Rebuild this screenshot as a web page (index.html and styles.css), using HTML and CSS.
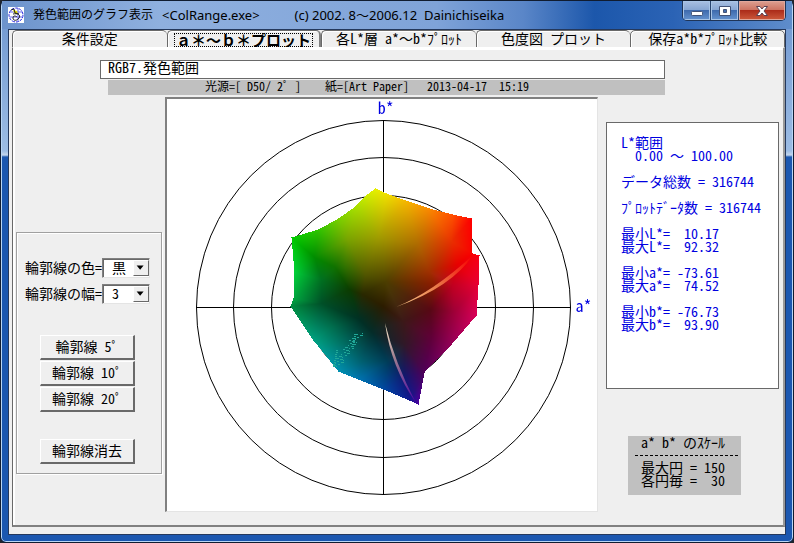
FILE: index.html
```html
<!DOCTYPE html>
<html lang="ja">

<head>
    <meta charset="utf-8">
    <title>発色範囲のグラフ表示</title>
    <link rel="stylesheet" href="styles.css">
</head>

<body>
    <div class="window">
        <header class="title-bar">
            <svg class="app-icon" width="16" height="16" viewBox="0 0 16 16">
                <rect width="16" height="16" fill="#fff" />
                <circle cx="8" cy="8" r="7" fill="none" stroke="#2222dd" stroke-dasharray="3 1" />
                <path d="M2 5h12M2 10h12M10 1v14" stroke="#6a6aee" fill="none" />
                <path d="M5 3l4 1 1 3-4-1z" fill="#e8e000" />
                <path d="M3 3l3-1 1 4 4 1M5 7c5-1 8 1 6 4s-6 3-6 0 3-2 4-1" fill="none" stroke="#222" />
            </svg>
            <h1><span>発色範囲のグラフ表示</span><span class="latin">&lt;ColRange.exe&gt;</span><span class="latin copyright">(c) 2002. 8～2006.12&nbsp; Dainichiseika</span></h1>
            <div class="window-buttons">
                <button type="button" aria-label="最小化">
                    <svg width="14" height="12" viewBox="0 0 14 12"><rect x="1.5" y="6.5" width="11" height="4" rx="1" fill="#fff" stroke="#435377" /></svg>
                </button>
                <button type="button" aria-label="最大化">
                    <svg width="14" height="12" viewBox="0 0 14 12"><path fill-rule="evenodd" d="M1.500 1.500h11v9h-11zM5.500 4.500v3h3v-3z" fill="#fff" stroke="#435377" /></svg>
                </button>
                <button type="button" class="close" aria-label="閉じる">
                    <svg width="14" height="12" viewBox="0 0 14 12"><path d="M1.500 1.500h3.500l2 2.500 2-2.500h3.500l-3.500 4.500 3.500 4.500h-3.500l-2-2.500-2 2.500h-3.500l3.500-4.500z" fill="#fff" stroke="#5c4050" /></svg>
                </button>
            </div>
        </header>

        <main class="client">
            <nav class="tabs">
                <button type="button">条件設定</button>
                <button type="button" class="active"><span class="wide">ａ＊～ｂ＊プロット</span></button>
                <button type="button">各L*層 a*<span class="wide">～</span>b*ﾌﾟﾛｯﾄ</button>
                <button type="button">色度図 プロット</button>
                <button type="button">保存a*b*ﾌﾟﾛｯﾄ比較</button>
            </nav>

            <section class="page">
                <div class="heading">
                    <input type="text" class="data-name" aria-label="データ名" value="RGB7.発色範囲">
                    <p class="conditions">光源=[ D50/ 2ﾟ ]    紙=[Art Paper]   2013-04-17  15:19</p>
                </div>

                <div class="columns">
                    <form class="outline-box">
                        <div class="field">
                            <label for="line-color">輪郭線の色=</label>
                            <span class="combo">
                                <select id="line-color">
                                    <option>黒</option>
                                    <option>白</option>
                                </select>
                                <svg width="16" height="16" viewBox="0 0 16 16"><path d="M3 5h8l-4 5z" /></svg>
                            </span>
                        </div>
                        <div class="field">
                            <label for="line-width">輪郭線の幅=</label>
                            <span class="combo">
                                <select id="line-width">
                                    <option>3</option>
                                    <option>2</option>
                                    <option>1</option>
                                </select>
                                <svg width="16" height="16" viewBox="0 0 16 16"><path d="M3 5h8l-4 5z" /></svg>
                            </span>
                        </div>
                        <div class="actions">
                            <button type="button">輪郭線 5ﾟ</button>
                            <button type="button">輪郭線 10ﾟ</button>
                            <button type="button">輪郭線 20ﾟ</button>
                            <button type="button" class="clear">輪郭線消去</button>
                        </div>
                    </form>

                    <div class="plot">
                        <div class="plot-area">
                            <canvas id="plot" width="430" height="412"></canvas>
                            <span class="axis axis-b">b*</span>
                            <span class="axis axis-a">a*</span>
                        </div>
                    </div>

                    <aside class="side">
                        <pre class="stats">L*範囲
  0.00 <span class="wide">～</span> 100.00

データ総数 = 316744

ﾌﾟﾛｯﾄﾃﾞｰﾀ数 = 316744

最小L*=  10.17
最大L*=  92.32

最小a*= -73.61
最大a*=  74.52

最小b*= -76.73
最大b*=  93.90</pre>
                        <div class="scale">
                            <h2>a* b* のｽｹｰﾙ</h2>
                            <hr>
                            <pre>最大円 = 150
各円毎 =  30</pre>
                        </div>
                    </aside>
                </div>
            </section>
        </main>
    </div>
    <script src="plot.js"></script>
</body>

</html>
```
FILE: styles.css
```css
* {
    box-sizing: border-box;
}

body {
    margin: 0;
    background: #20242c;
    font-family: "Noto Sans CJK JP", sans-serif;
    font-size: 14px;
    /* half-width latin so that the columns line up */
    font-feature-settings: "hwid";
    color: #000;
}

button,
input,
select,
pre {
    font: inherit;
    font-feature-settings: inherit;
    color: inherit;
    margin: 0;
}

.wide {
    font-feature-settings: normal;
}

/* Window frame */
.window {
    display: flex;
    flex-direction: column;
    min-height: 100vh;
    padding: 0 7px 7px;
    border: 1px solid #101c30;
    border-radius: 6px;
    background: linear-gradient(#6d95cf 0, #9cbce4 150px, #c5d7ee 154px, #1b57b0 156px, #1b57b0 100%);
    box-shadow: inset 0 0 0 1px #b9d6f5;
}

.title-bar {
    display: flex;
    align-items: flex-start;
    height: 28px;
    margin: 0 -6px;
    padding-left: 6px;
    background: linear-gradient(90deg, #6c93cc 0, #8fb0df 20%, #7fa3d8 55%, #5a86c8 66%, #1c57ab 75%, #2b63b5 85%, #5f8dcb 100%);
}

.app-icon {
    margin-top: 6px;
}

h1 {
    display: flex;
    gap: 9px;
    flex: 1;
    margin: 5px 0 0 9px;
    font-family: "Noto Sans", "Noto Sans CJK JP", sans-serif;
    font-feature-settings: normal;
    font-size: 12px;
    font-weight: normal;
    line-height: 18px;
    white-space: nowrap;
}

h1 .latin {
    font-size: 13px;
}

h1 .copyright {
    margin-left: 26px;
}

.window-buttons {
    display: flex;
    margin-right: 6px;
    border: 1px solid #1f3558;
    border-top: 0;
    border-radius: 0 0 5px 5px;
    overflow: hidden;
}

.window-buttons button {
    display: flex;
    align-items: center;
    justify-content: center;
    width: 28px;
    height: 19px;
    padding: 0;
    border: 0;
    border-right: 1px solid #294570;
    background: linear-gradient(#a9c0e2 0, #86a5d2 48%, #3f6bae 50%, #6593cf 100%);
    box-shadow: inset 0 0 0 1px #a8c4e6;
}

.window-buttons .close {
    width: 46px;
    border-right: 0;
    background: linear-gradient(#dda092 0, #cc7260 48%, #ac2c1a 50%, #cd5a3c 100%);
    box-shadow: inset 0 0 0 1px #e0a79b;
}

.client {
    display: flex;
    flex-direction: column;
    flex: 1;
    padding: 0 0 7px 3px;
    border: 1px solid #24385c;
    background: #efefef;
}

/* Tabs */
.tabs {
    display: grid;
    grid-template-columns: repeat(5, 1fr);
    height: 17px;
}

.tabs button {
    padding: 0 0 2px;
    border: 0;
    border-top: 1px solid #696969;
    border-left: 1px solid #696969;
    border-bottom: 1px solid #696969;
    border-radius: 5px 5px 0 0;
    background: #efefef;
    box-shadow: inset 1px 1px #fff;
    line-height: 14px;
    white-space: nowrap;
}

.tabs button:last-child {
    border-right: 1px solid #696969;
}

.tabs .active {
    padding: 0;
    border-right: 2px solid #808080;
    border-bottom: 0;
    font-size: 15px;
    font-weight: bold;
}

.tabs .active span {
    display: inline-block;
    padding: 0 2px;
    outline: 1px dotted #000;
    outline-offset: -1px;
}

.page {
    flex: 1;
    border: 1px solid #696969;
    border-top: 1px solid #fff;
    border-right: 2px solid #999;
    border-bottom: 2px solid #808080;
    box-shadow: inset 2px 2px #fff;
    padding: 12px 6px 13px 2px;
}

/* Data name and measuring conditions */
.heading {
    margin: 0 112px 0 85px;
}

.data-name {
    display: block;
    width: 100%;
    height: 19px;
    padding: 0 7px 5px;
    border: 1px solid #696969;
    background: #fff;
    line-height: 17px;
}

.conditions {
    height: 15px;
    margin: 1px 0 2px 8px;
    padding-left: 97px;
    background: #c0c0c0;
    font-size: 12px;
    line-height: 12px;
    white-space: pre;
}

.columns {
    display: grid;
    grid-template-columns: 147px minmax(0, 1fr) 176px;
    column-gap: 3px;
}

/* Outline settings */
.outline-box {
    align-self: start;
    height: 242px;
    margin-top: 135px;
    margin-left: 1px;
    padding: 25px 0 0 8px;
    border: 1px solid #a0a0a0;
    box-shadow: 1px 1px #fff, inset 1px 1px #fff;
}

.field {
    display: flex;
    align-items: flex-start;
    height: 20px;
    margin-bottom: 6px;
    line-height: 18px;
    white-space: nowrap;
}

.combo {
    position: relative;
    width: 48px;
    height: 20px;
    border: 1px solid #808080;
    border-right-color: #e4e4e4;
    border-bottom-color: #e4e4e4;
    box-shadow: inset 1px 1px #696969;
    background: #fff;
}

.combo select {
    appearance: none;
    display: block;
    width: 100%;
    height: 18px;
    padding: 0 16px 2px 9px;
    border: 0;
    background: transparent;
    line-height: 16px;
}

.combo svg {
    position: absolute;
    top: 1px;
    right: 0;
    border: 1px solid #fff;
    border-right-color: #696969;
    border-bottom-color: #696969;
    background: #efefef;
    pointer-events: none;
}

.actions {
    display: flex;
    flex-direction: column;
    gap: 1px;
    width: 95px;
    margin: 31px 0 0 15px;
}

.actions button {
    height: 25px;
    padding: 0 0 2px;
    border: 1px solid #fff;
    border-right: 2px solid #696969;
    border-bottom: 2px solid #696969;
    background: #efefef;
    line-height: 20px;
    white-space: nowrap;
}

.actions .clear {
    margin-top: 26px;
}

/* Plot */
.plot {
    display: flex;
    justify-content: center;
    min-height: 415px;
    border: 2px solid #808080;
    border-right: 1px solid #e4e4e4;
    border-bottom: 1px solid #e4e4e4;
    background: #fff;
}

.plot-area {
    position: relative;
    align-self: flex-start;
}

.plot-area canvas {
    display: block;
    max-width: 100%;
}

.axis {
    position: absolute;
    color: #0000e0;
    font-size: 16px;
    line-height: 16px;
}

.axis-b {
    left: 49%;
    top: 0;
}

.axis-a {
    left: 95%;
    top: 48%;
}

/* Results on the right */
.side {
    padding-left: 5px;
    margin-right: -2px;
}

.stats {
    height: 267px;
    margin-top: 25px;
    padding: 13px 0 0 14px;
    border: 1px solid #696969;
    background: #fff;
    color: #0000e0;
    line-height: 13px;
}

.scale {
    width: 113px;
    height: 59px;
    margin: 47px 0 0 22px;
    padding: 0 3px 0 7px;
    background: #c0c0c0;
    line-height: 13px;
}

.scale h2 {
    margin: 0 0 0 6px;
    font-size: 14px;
    font-weight: normal;
}

.scale hr {
    margin: 6px 0 5px;
    border: 0;
    border-top: 1px dashed #000;
}

.scale pre {
    margin-left: 6px;
}
```
FILE: plot.js
```js
const canvas = document.getElementById("plot");
const ctx = canvas.getContext("2d");
const cx = 216;
const cy = 208;

// edge of the colour range, clockwise: x, y, colour
const edge = [
    [208, 89, "e8f000"], [219, 94, "f0e000"], [238, 101, "f5b800"], [262, 109, "fa8800"], [285, 115, "ff5000"], [304, 119, "ff0000"],
    [305, 154, "fa0000"], [312, 156, "f80014"], [311, 185, "e80034"], [309, 216, "d80058"],
    [284, 245, "940058"], [257, 273, "500058"], [251, 305, "4800a0"], [242, 301, "101890"],
    [216, 290, "0048a0"], [191, 280, "0074b0"], [171, 272, "0090b0"], [146, 241, "00a080"],
    [123, 207, "008c40"], [126, 199, "00a840"], [127, 173, "00d038"], [124, 138, "00cc00"],
    [151, 130, "30c400"], [171, 119, "78d000"], [188, 107, "a8e000"], [200, 95, "d0ec00"]
];

const inner = [
    [211, 138, "a09c00"], [250, 144, "b06c00"], [284, 142, "e83000"], [262, 172, "a03000"],
    [180, 140, "78a400"], [168, 168, "107000"], [178, 168, "307000"], [182, 190, "0c3c00"],
    [198, 176, "505400"], [218, 182, "4c3e00"], [195, 195, "282800"],
    [216, 207, "2c1c00"], [266, 184, "8c1c00"], [263, 210, "580814"], [204, 232, "042c28"],
    [192, 220, "003024"], [164, 228, "007050"], [180, 245, "006860"], [194, 262, "006070"],
    [237, 245, "301828"], [236, 222, "3c1818"], [264, 238, "600038"],
    [154, 204, "005028"], [154, 180, "007020"], [147, 158, "008c00"], [287, 212, "a00038"],
    [237, 278, "101870"], [285, 186, "c00020"], [220, 262, "003c58"], [290, 165, "e80000"]
];

function toPoint(p) {
    let n = parseInt(p[2], 16);
    return { x: p[0], y: p[1], c: [n >> 16, (n >> 8) & 255, n & 255] };
}

function tracePath(points) {
    ctx.beginPath();
    for (let p of points) {
        ctx.lineTo(p[0], p[1]);
    }
    ctx.closePath();
}

function cross(a, b, p) {
    return (b.x - a.x) * (p.y - a.y) - (b.y - a.y) * (p.x - a.x);
}

// Delaunay triangles: no other point lies in the circle round the three corners
function triangulate(pts) {
    let result = [];
    for (let i = 0; i < pts.length; i++) {
        for (let j = i + 1; j < pts.length; j++) {
            for (let k = j + 1; k < pts.length; k++) {
                let a = pts[i], b = pts[j], c = pts[k];
                let d = 2 * cross(a, b, c);
                if (d == 0) continue;
                let bx = b.x - a.x, by = b.y - a.y;
                let dx = c.x - a.x, dy = c.y - a.y;
                let ux = (dy * (bx * bx + by * by) - by * (dx * dx + dy * dy)) / d;
                let uy = (bx * (dx * dx + dy * dy) - dx * (bx * bx + by * by)) / d;
                let r = ux * ux + uy * uy;
                let free = pts.every(p => (p.x - a.x - ux) ** 2 + (p.y - a.y - uy) ** 2 >= r - 0.001);
                if (free) result.push([a, b, c]);
            }
        }
    }
    return result;
}

function drawRings() {
    ctx.strokeStyle = "#000";
    ctx.lineWidth = 1;
    for (let i = 1; i <= 5; i++) {
        ctx.beginPath();
        ctx.arc(cx + 0.5, cy + 0.5, Math.floor(i * 37.5), 0, Math.PI * 2);
        ctx.stroke();
    }
    ctx.fillStyle = "#000";
    ctx.fillRect(cx - 187, cy, 375, 1);
    ctx.fillRect(cx, cy - 187, 1, 375);
}

function drawRange() {
    let triangles = triangulate(edge.concat(inner).map(toPoint));
    let img = ctx.getImageData(0, 0, canvas.width, canvas.height);
    tracePath(edge);
    for (let y = 85; y < 310; y++) {
        for (let x = 120; x < 316; x++) {
            if (!ctx.isPointInPath(x, y)) continue;
            let p = { x: x, y: y };
            for (let [a, b, c] of triangles) {
                let area = cross(a, b, c);
                let u = cross(b, c, p) / area;
                let v = cross(c, a, p) / area;
                let w = 1 - u - v;
                if (u < -0.001 || v < -0.001 || w < -0.001) continue;
                let at = (y * canvas.width + x) * 4;
                for (let i = 0; i < 3; i++) {
                    img.data[at + i] = a.c[i] * u + b.c[i] * v + c.c[i] * w;
                }
                img.data[at + 3] = 255;
                break;
            }
        }
    }
    ctx.putImageData(img, 0, 0);
}

function drawFolds() {
    // light fold towards red
    let g = ctx.createLinearGradient(230, 207, 306, 160);
    g.addColorStop(0, "#ffd090");
    g.addColorStop(0.5, "#e87848");
    g.addColorStop(1, "#f80000");
    ctx.fillStyle = g;
    ctx.beginPath();
    ctx.moveTo(229, 208);
    ctx.quadraticCurveTo(266, 193, 306, 156);
    ctx.quadraticCurveTo(285, 188, 229, 208);
    ctx.fill();

    // light fold towards violet
    g = ctx.createLinearGradient(218, 225, 250, 304);
    g.addColorStop(0, "#fff0d0");
    g.addColorStop(0.4, "#a08090");
    g.addColorStop(1, "#4800a0");
    ctx.fillStyle = g;
    ctx.beginPath();
    ctx.moveTo(218, 224);
    ctx.quadraticCurveTo(224, 268, 249, 304);
    ctx.quadraticCurveTo(228, 264, 218, 224);
    ctx.fill();

    // scattered points on the cyan side
    ctx.fillStyle = "#20a898";
    for (let i = 0; i < 34; i++) {
        let x = 195 - i * 0.7;
        let y = 234 + i;
        ctx.fillRect(Math.round(x - (i * 5 % 9)), y, 1 + i % 3, 1);
        if (i % 2) ctx.fillRect(Math.round(x - (i * 7 % 15)), y, 2, 1);
    }
}

drawRings();
drawRange();
drawFolds();
```
